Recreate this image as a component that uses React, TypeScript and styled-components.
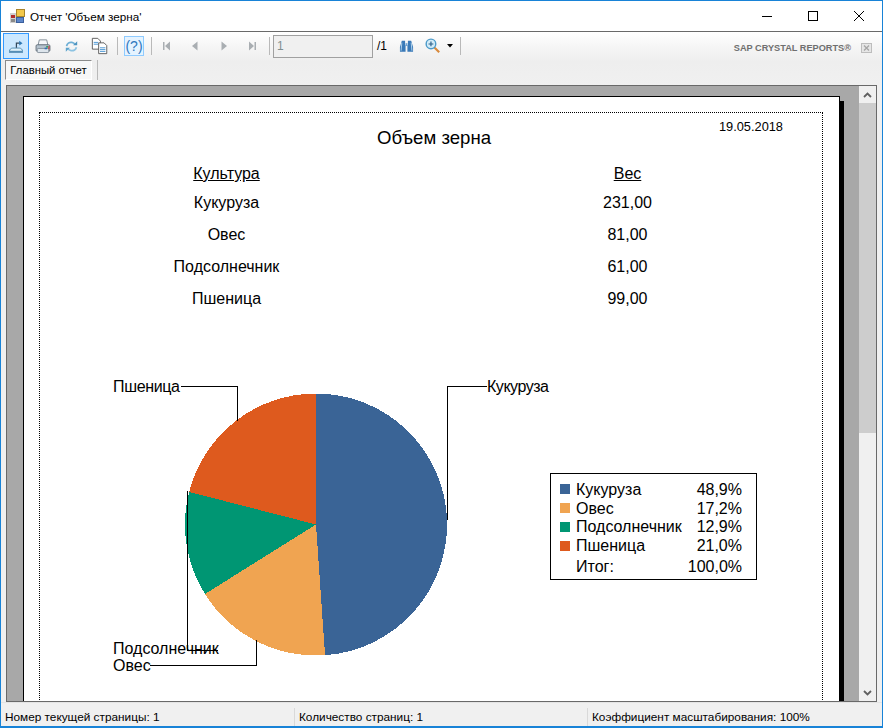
import React from "react";
import styled, { createGlobalStyle } from "styled-components";

const GlobalStyle = createGlobalStyle`
  html, body {
    margin: 0;
    padding: 0;
    width: 883px;
    height: 728px;
    overflow: hidden;
    background: #fff;
    font-family: "Liberation Sans", Arial, sans-serif;
  }
`;

const Window = styled.div`
  box-sizing: border-box;
  width: 883px;
  height: 728px;
  display: flex;
  flex-direction: column;
  background: #f0f0f0;
  border: 1px solid #1883d7;
  border-bottom-width: 2px;
`;

const TitleBar = styled.div`
  height: 30px;
  flex: none;
  display: flex;
  align-items: center;
  background: #fff;
  padding-left: 9px;
`;

const TitleText = styled.span`
  margin-left: 5px;
  flex: 1;
  font-size: 11.7px;
  color: #000;
`;

const CaptionButton = styled.div`
  width: 46px;
  height: 30px;
  display: flex;
  align-items: center;
  justify-content: center;
`;

const Toolbar = styled.div`
  flex: none;
  border-top: 1px solid #696969;
  background: linear-gradient(#ffffff 0, #f6f6f6 14px, #eeeeee 30px, #f0f0f0 100%);
`;

const ToolRow = styled.div`
  height: 28px;
  display: flex;
  align-items: center;
  padding-left: 2px;
`;

const ToolButton = styled.div<{ $w?: number; $active?: boolean; $soft?: boolean }>`
  box-sizing: border-box;
  width: ${(p) => p.$w ?? 28}px;
  height: ${(p) => (p.$active ? 26 : p.$soft ? 20 : 24)}px;
  flex: none;
  display: flex;
  align-items: center;
  justify-content: center;
  background: ${(p) => (p.$active ? "#cce8ff" : p.$soft ? "#e5f3ff" : "transparent")};
  border: 1px solid ${(p) => (p.$active ? "#3399ff" : p.$soft ? "#8fcbff" : "transparent")};
`;

const Separator = styled.div<{ $h?: number; $ml?: number; $mr?: number }>`
  width: 1px;
  height: ${(p) => p.$h ?? 18}px;
  flex: none;
  margin-left: ${(p) => p.$ml ?? 0}px;
  margin-right: ${(p) => p.$mr ?? 0}px;
  background: #b9b9b9;
`;

const PageInput = styled.div`
  box-sizing: border-box;
  width: 100px;
  height: 23px;
  flex: none;
  border: 1px solid #a0a0a0;
  background: #f0f0f0;
  padding: 3px 3px;
  font-size: 12px;
  line-height: 14px;
  color: #7f8f90;
`;

const PageTotal = styled.span`
  width: 16px;
  flex: none;
  margin-left: 4px;
  font-size: 12px;
  color: #000;
`;

const Brand = styled.div`
  margin-left: auto;
  display: flex;
  align-items: center;
  padding-top: 3px;
  padding-right: 10px;
  gap: 10px;
`;

const BrandText = styled.span`
  font-size: 9.2px;
  font-weight: bold;
  color: #6f6f6f;
  white-space: nowrap;
`;

const TabRow = styled.div`
  height: 25px;
  display: flex;
  padding-left: 4px;
  box-sizing: border-box;
`;

const Tab = styled.div`
  box-sizing: border-box;
  width: 87px;
  height: 20px;
  border: 1px solid;
  border-color: #8a8a8a #fff #fff #8a8a8a;
  background: #f7f7f7;
  font-size: 11.3px;
  line-height: 19px;
  text-align: center;
  color: #000;
`;

const Viewer = styled.div`
  box-sizing: border-box;
  height: 617px;
  flex: none;
  margin: 0 5px;
  display: flex;
  border: 1px solid #696969;
  background: #a8a8a8;
  overflow: hidden;
`;

const PageArea = styled.div`
  flex: 1;
  padding: 10px 0 0 16px;
  min-width: 0;
`;

const Page = styled.div`
  box-sizing: border-box;
  width: 817px;
  height: 900px;
  padding: 15px 16px 0 15px;
  background: #fff;
  border: 1px solid #000;
  box-shadow: 4px 5px 0 #000;
`;

const Report = styled.div`
  height: 860px;
  border: 1px dotted #000;
  color: #000;
`;

const TitleRow = styled.div`
  display: grid;
  grid-template-columns: 1fr auto 1fr;
  height: 48px;
  padding-left: 6px;
`;

const ReportTitle = styled.div`
  grid-column: 2;
  padding-top: 14px;
  font-size: 18.6px;
  line-height: 21px;
`;

const ReportDate = styled.div`
  grid-column: 3;
  justify-self: end;
  margin-right: 39px;
  padding-top: 7px;
  font-size: 12.8px;
  line-height: 14px;
  white-space: nowrap;
`;

const DataTable = styled.div`
  display: grid;
  grid-template-columns: 253px 200px;
  column-gap: 174.5px;
  margin-left: 60px;
  font-size: 16px;
  line-height: 18px;
  text-align: center;
`;

const HeadCell = styled.div`
  height: 33px;
  padding-top: 4px;
  box-sizing: border-box;
  text-decoration: underline;
`;

const Cell = styled.div`
  height: 32px;
`;

const ChartRow = styled.div`
  margin-top: 48px;
  display: flex;
  align-items: flex-start;
`;

const ChartSvg = styled.svg`
  display: block;
  flex: none;
  overflow: visible;
  font-family: "Liberation Sans", Arial, sans-serif;
  font-size: 16px;
`;

const Legend = styled.div`
  box-sizing: border-box;
  width: 207px;
  height: 107px;
  margin-top: 103px;
  padding: 6px 14px 0 9px;
  border: 1px solid #000;
  font-size: 16px;
  line-height: 19px;
`;

const LegendRow = styled.div`
  display: flex;
  align-items: center;
  height: 18.75px;
`;

const LegendTotal = styled(LegendRow)`
  margin-top: 2px;
`;

const Swatch = styled.span<{ $color?: string }>`
  width: 10px;
  height: 10px;
  flex: none;
  margin-right: 6px;
  background: ${(p) => p.$color ?? "transparent"};
`;

const LegendValue = styled.span`
  margin-left: auto;
`;

const ScrollBar = styled.div`
  width: 17px;
  flex: none;
  display: flex;
  flex-direction: column;
  background: #f0f0f0;
`;

const ScrollArrow = styled.div`
  height: 17px;
  flex: none;
  display: flex;
  align-items: center;
  justify-content: center;
`;

const ScrollThumb = styled.div`
  height: 330px;
  flex: none;
  background: #cdcdcd;
`;

const ScrollTrack = styled.div`
  flex: 1;
`;

const StatusBar = styled.div`
  flex: 1;
  display: flex;
  align-items: center;
  padding-top: 5px;
  box-sizing: border-box;
  border-top: 1px solid #e4e4e4;
  font-size: 11.8px;
  color: #000;
`;

const StatusCell = styled.div<{ $w: number; $divider?: boolean }>`
  box-sizing: border-box;
  width: ${(p) => p.$w}px;
  height: 18px;
  line-height: 18px;
  padding-left: 4px;
  border-left: ${(p) => (p.$divider ? "1px solid #d9d9d9" : "none")};
  white-space: nowrap;
`;

type Slice = { name: string; pct: number; label: string; color: string };

const slices: Slice[] = [
  { name: "Кукуруза", pct: 48.9, label: "48,9%", color: "#3a6496" },
  { name: "Овес", pct: 17.2, label: "17,2%", color: "#f0a451" },
  { name: "Подсолнечник", pct: 12.9, label: "12,9%", color: "#009673" },
  { name: "Пшеница", pct: 21.0, label: "21,0%", color: "#de5a1e" },
];

const rows = [
  ["Кукуруза", "231,00"],
  ["Овес", "81,00"],
  ["Подсолнечник", "61,00"],
  ["Пшеница", "99,00"],
];

// chart drawing uses its own origin: page x - 40, page y - 370
const CX = 276;
const CY = 154.5;
const R = 131;

const point = (pct: number) => {
  const a = (pct / 100) * Math.PI * 2;
  return `${(CX + R * Math.sin(a)).toFixed(2)} ${(CY - R * Math.cos(a)).toFixed(2)}`;
};

const PieChart: React.FC = () => {
  let from = 0;
  return (
    <ChartSvg width="510" height="330" viewBox="0 0 510 330">
      {slices.map((s) => {
        const to = from + s.pct;
        const d = `M${CX} ${CY} L${point(from)} A${R} ${R} 0 ${s.pct > 50 ? 1 : 0} 1 ${point(to)} Z`;
        from = to;
        return <path key={s.name} d={d} fill={s.color} shapeRendering="crispEdges" />;
      })}
      <g fill="none" stroke="#000" strokeWidth="1" shapeRendering="crispEdges">
        <path d="M141 16.5H197.5V51" />
        <path d="M446.5 16.5H407.5V150" />
        <path d="M147.5 121V280.5H178" />
        <path d="M110 295.5H216.5V270" />
      </g>
      <text x="73" y="22" textLength={67}>Пшеница</text>
      <text x="447" y="22" textLength={62}>Кукуруза</text>
      <text x="73" y="284">Подсолнечник</text>
      <text x="73" y="301">Овес</text>
    </ChartSvg>
  );
};

const AppIcon = () => (
  <svg width="15" height="15" viewBox="0 0 15 15">
    <rect x="0" y="4" width="7" height="10" fill="#cfcfcf" />
    <rect x="1" y="6" width="4" height="3" fill="#b02a2a" />
    <rect x="1" y="10" width="4" height="3" fill="#8a8a8a" />
    <rect x="6.5" y="0.5" width="8" height="7" fill="#f3c84a" stroke="#a8842c" />
    <rect x="6.5" y="8.5" width="7" height="5" fill="#5c86c9" stroke="#3b5f9c" />
  </svg>
);

const MinimizeIcon = () => (
  <svg width="10" height="10" viewBox="0 0 10 10">
    <path d="M0 5.5H10" stroke="#000" shapeRendering="crispEdges" />
  </svg>
);
const MaximizeIcon = () => (
  <svg width="10" height="10" viewBox="0 0 10 10">
    <rect x="0.5" y="0.5" width="9" height="9" fill="none" stroke="#000" shapeRendering="crispEdges" />
  </svg>
);
const CloseIcon = () => (
  <svg width="10" height="10" viewBox="0 0 10 10">
    <path d="M0 0L10 10M10 0L0 10" stroke="#000" />
  </svg>
);

const ExportIcon = () => (
  <svg width="18" height="18" viewBox="0 0 22 22">
    <path d="M3 17.5C3 15 5 13.5 7 13.5H15C17 13.5 19 15 19 17.5Z" fill="#dff1fb" stroke="#3a7ca8" />
    <path d="M2.5 18.5H19.5" stroke="#2f6f9c" strokeWidth="1.3" />
    <path d="M11.5 13V7.5H16" fill="none" stroke="#33485c" strokeWidth="1.5" />
    <path d="M15 4.5L19 7.5L15 10.5Z" fill="#2f78b5" />
  </svg>
);

const PrintIcon = () => (
  <svg width="18" height="18" viewBox="0 0 22 22">
    <path d="M6.5 3.5H15.5L17 10H5Z" fill="#f5f7fa" stroke="#6d7a86" />
    <rect x="2.5" y="9.5" width="17" height="8" rx="1.5" fill="#b5c3cf" stroke="#56626d" />
    <rect x="4" y="14" width="14" height="5" rx="1" fill="#dde5ec" stroke="#7b8792" />
    <rect x="15" y="11" width="2" height="2" fill="#2a9a55" />
    <rect x="17.5" y="11" width="1.5" height="4" fill="#c23b3b" />
    <rect x="13" y="13" width="3" height="2" fill="#2f6fb5" />
  </svg>
);

const RefreshIcon = () => (
  <svg width="15" height="15" viewBox="0 0 20 20" fill="none">
    <path d="M3.5 9.5C4 6 7 4 10.5 4.5C12.5 4.8 14 6 14.8 7.5" stroke="#6fb0d6" strokeWidth="2.4" />
    <path d="M12.2 8.2H17.6V3Z" fill="#4d94c0" />
    <path d="M16.5 11C16 14 13 16 9.5 15.5C7.5 15.2 6 14 5.2 12.5" stroke="#8cc3e2" strokeWidth="2.4" />
    <path d="M7.8 11.8H2.4V17Z" fill="#5da3cc" />
  </svg>
);

const CopyIcon = () => (
  <svg width="18" height="18" viewBox="0 0 20 20">
    <path d="M1.5 1.5H7.5L10.5 4.5V13.5H1.5Z" fill="#fff" stroke="#555" />
    <path d="M3 6H8" stroke="#3e8fd0" />
    <path d="M3 8H8" stroke="#3e8fd0" />
    <path d="M8.5 6.5H14.5L17.5 9.5V18.5H8.5Z" fill="#fff" stroke="#555" />
    <path d="M10 12H16M10 14H16M10 16H16" stroke="#3e8fd0" />
  </svg>
);

const NavIcon: React.FC<{ dir: "first" | "prev" | "next" | "last" }> = ({ dir }) => (
  <svg width="10" height="12" viewBox="0 0 10 12" fill="#a9aeb2">
    {dir === "first" && <path d="M1 2H2.5V10H1ZM8 1.5V10.5L3 6Z" />}
    {dir === "prev" && <path d="M7.5 1.5V10.5L2 6Z" />}
    {dir === "next" && <path d="M2.5 1.5V10.5L8 6Z" />}
    {dir === "last" && <path d="M9 2H7.5V10H9ZM2 1.5V10.5L7 6Z" />}
  </svg>
);

const BinocularsIcon = () => (
  <svg width="15" height="14" viewBox="0 0 16 14">
    <path d="M3 1.5H6.5V6H7V13H1V8Z" fill="#3a7ab8" />
    <path d="M13 1.5H9.5V6H9V13H15V8Z" fill="#3a7ab8" />
    <rect x="7" y="4" width="2" height="3" fill="#6fa3d1" />
    <path d="M3 3.5L2.2 12M13 3.5L13.8 12" stroke="#b8d6ee" />
  </svg>
);

const ZoomIcon = () => (
  <svg width="16" height="16" viewBox="0 0 18 18" fill="none">
    <path d="M10 10L16 16" stroke="#d98a3c" strokeWidth="2.4" />
    <circle cx="6.7" cy="6.7" r="5.4" fill="#d3ecf8" stroke="#4c9ac9" strokeWidth="1.6" />
    <path d="M4 6.7H9.4M6.7 4V9.4" stroke="#2b5f88" strokeWidth="1.3" />
  </svg>
);

const HelpIcon = () => (
  <svg width="18" height="16" viewBox="0 0 18 16">
    <text x="9" y="13" textAnchor="middle" fontSize="14" fill="#2f78bd" fontFamily="Liberation Sans">(?)</text>
  </svg>
);

const CaretDown = () => (
  <svg width="6" height="4" viewBox="0 0 6 4">
    <path d="M0 0H6L3 3.5Z" fill="#000" />
  </svg>
);

const SmallCloseIcon = () => (
  <svg width="11" height="10" viewBox="0 0 11 10">
    <rect x="0.5" y="0.5" width="10" height="9" fill="#e6e6e6" stroke="#bdbdbd" />
    <path d="M3 2.5L8 7.5M8 2.5L3 7.5" stroke="#a5a5a5" strokeWidth="1.3" />
  </svg>
);

const Chevron: React.FC<{ up?: boolean }> = ({ up }) => (
  <svg width="9" height="6" viewBox="0 0 9 6" fill="none">
    <path d={up ? "M1 5L4.5 1.5L8 5" : "M1 1L4.5 4.5L8 1"} stroke="#606060" strokeWidth="1.8" />
  </svg>
);

export default function App() {
  return (
    <>
      <GlobalStyle />
      <Window>
        <TitleBar>
          <AppIcon />
          <TitleText>Отчет 'Объем зерна'</TitleText>
          <CaptionButton><MinimizeIcon /></CaptionButton>
          <CaptionButton><MaximizeIcon /></CaptionButton>
          <CaptionButton><CloseIcon /></CaptionButton>
        </TitleBar>
        <Toolbar>
          <ToolRow>
            <ToolButton $w={26} $active><ExportIcon /></ToolButton>
            <ToolButton $w={28}><PrintIcon /></ToolButton>
            <ToolButton $w={28}><RefreshIcon /></ToolButton>
            <ToolButton $w={30}><CopyIcon /></ToolButton>
            <Separator $ml={2} $mr={6} />
            <ToolButton $w={20} $soft><HelpIcon /></ToolButton>
            <Separator $ml={7} $mr={2} />
            <ToolButton $w={26}><NavIcon dir="first" /></ToolButton>
            <ToolButton $w={29}><NavIcon dir="prev" /></ToolButton>
            <ToolButton $w={29}><NavIcon dir="next" /></ToolButton>
            <ToolButton $w={28}><NavIcon dir="last" /></ToolButton>
            <Separator $ml={3} $mr={3} />
            <PageInput>1</PageInput>
            <PageTotal>/1</PageTotal>
            <ToolButton $w={26}><BinocularsIcon /></ToolButton>
            <ToolButton $w={28}><ZoomIcon /></ToolButton>
            <CaretDown />
            <Separator $ml={7} />
            <Brand>
              <BrandText>SAP CRYSTAL REPORTS®</BrandText>
              <SmallCloseIcon />
            </Brand>
          </ToolRow>
          <TabRow>
            <Tab>Главный отчет</Tab>
            <Separator $h={20} $ml={5} />
          </TabRow>
        </Toolbar>
        <Viewer>
          <PageArea>
            <Page>
              <Report>
                <TitleRow>
                  <ReportTitle>Объем зерна</ReportTitle>
                  <ReportDate>19.05.2018</ReportDate>
                </TitleRow>
                <DataTable>
                  <HeadCell>Культура</HeadCell>
                  <HeadCell>Вес</HeadCell>
                  {rows.map(([name, weight]) => (
                    <React.Fragment key={name}>
                      <Cell>{name}</Cell>
                      <Cell>{weight}</Cell>
                    </React.Fragment>
                  ))}
                </DataTable>
                <ChartRow>
                  <PieChart />
                  <Legend>
                    {slices.map((s) => (
                      <LegendRow key={s.name}>
                        <Swatch $color={s.color} />
                        {s.name}
                        <LegendValue>{s.label}</LegendValue>
                      </LegendRow>
                    ))}
                    <LegendTotal>
                      <Swatch />
                      Итог:
                      <LegendValue>100,0%</LegendValue>
                    </LegendTotal>
                  </Legend>
                </ChartRow>
              </Report>
            </Page>
          </PageArea>
          <ScrollBar>
            <ScrollArrow><Chevron up /></ScrollArrow>
            <ScrollThumb />
            <ScrollTrack />
            <ScrollArrow><Chevron /></ScrollArrow>
          </ScrollBar>
        </Viewer>
        <StatusBar>
          <StatusCell $w={293}>Номер текущей страницы: 1</StatusCell>
          <StatusCell $w={293} $divider>Количество страниц: 1</StatusCell>
          <StatusCell $w={290} $divider>Коэффициент масштабирования: 100%</StatusCell>
        </StatusBar>
      </Window>
    </>
  );
}
